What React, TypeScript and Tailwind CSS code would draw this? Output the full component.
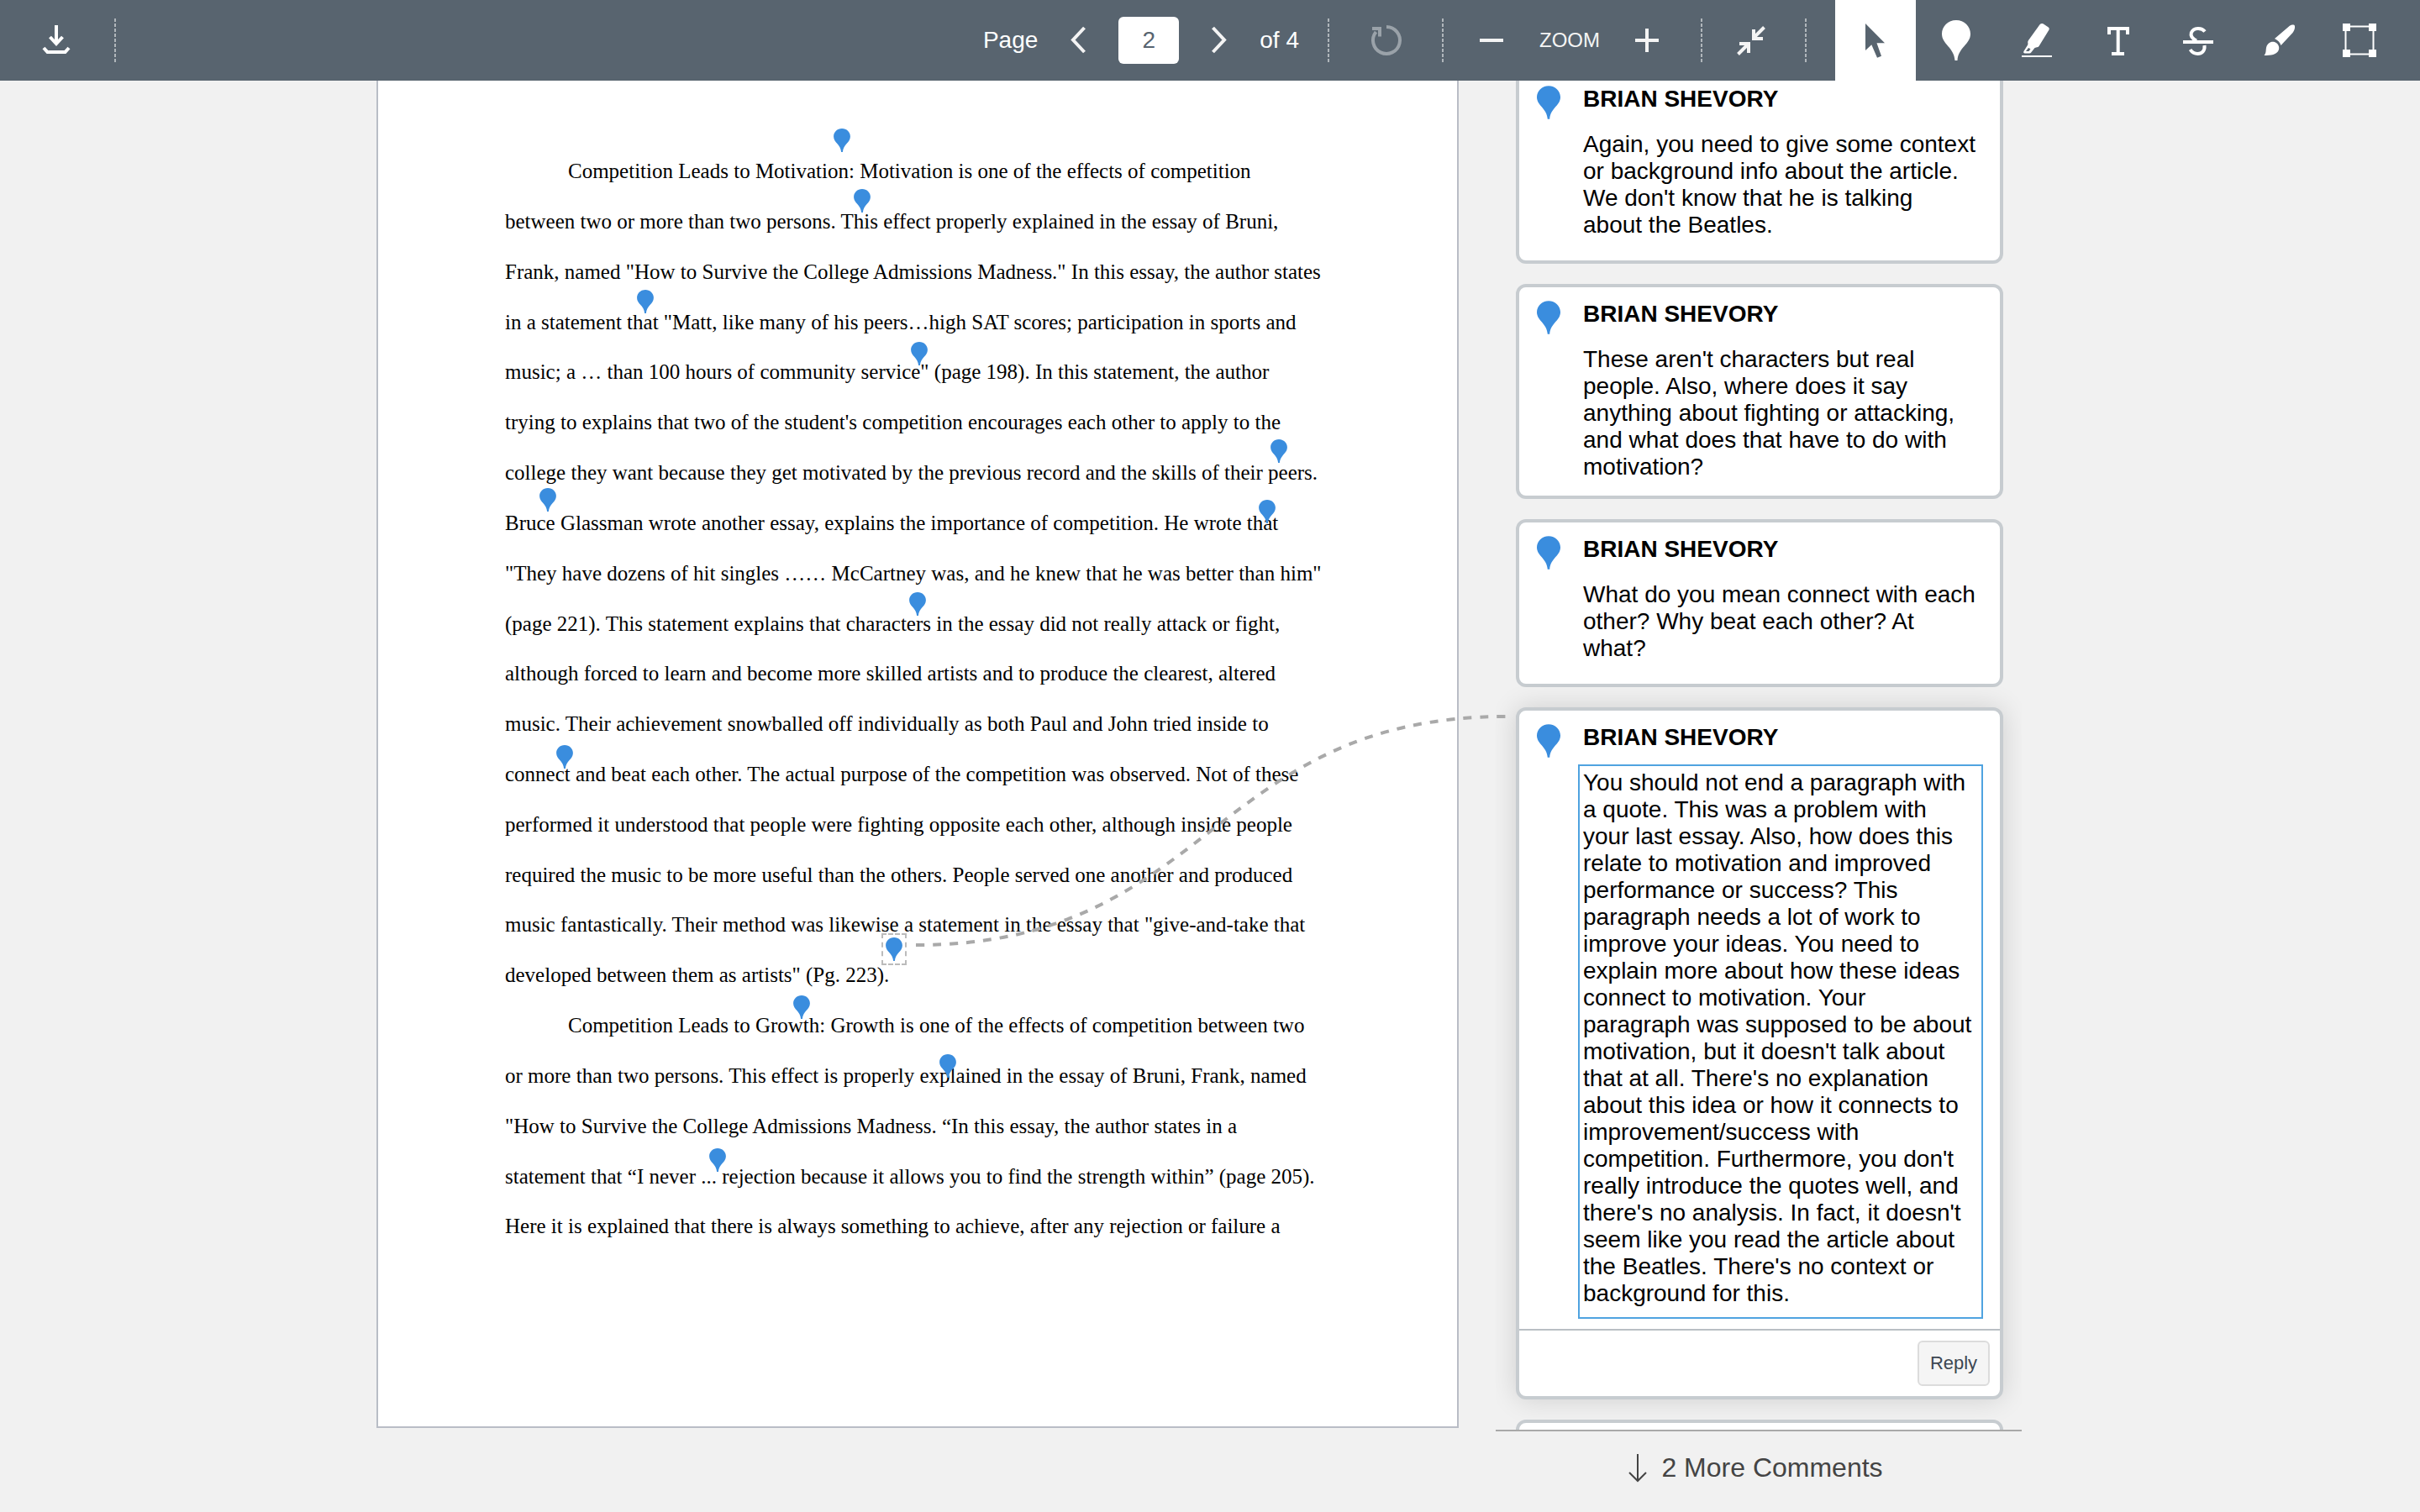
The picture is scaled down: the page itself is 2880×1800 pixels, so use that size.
import { useState } from "react";
import type { ReactNode } from "react";

type Pin = { x: number; y: number };

type Comment = {
  id: number;
  text: string;
  space: string;
};

const REVIEWER = "BRIAN SHEVORY";

const lines = [
  { text: "Competition Leads to Motivation: Motivation is one of the effects of competition", indent: true },
  { text: "between two or more than two persons. This effect properly explained in the essay of Bruni," },
  { text: 'Frank, named "How to Survive the College Admissions Madness." In this essay, the author states' },
  { text: 'in a statement that "Matt, like many of his peers…high SAT scores; participation in sports and' },
  { text: 'music; a … than 100 hours of community service" (page 198). In this statement, the author' },
  { text: "trying to explains that two of the student's competition encourages each other to apply to the" },
  { text: "college they want because they get motivated by the previous record and the skills of their peers." },
  { text: "Bruce Glassman wrote another essay, explains the importance of competition. He wrote that" },
  { text: '"They have dozens of hit singles …… McCartney was, and he knew that he was better than him"' },
  { text: "(page 221). This statement explains that characters in the essay did not really attack or fight," },
  { text: "although forced to learn and become more skilled artists and to produce the clearest, altered" },
  { text: "music. Their achievement snowballed off individually as both Paul and John tried inside to" },
  { text: "connect and beat each other. The actual purpose of the competition was observed. Not of these" },
  { text: "performed it understood that people were fighting opposite each other, although inside people" },
  { text: "required the music to be more useful than the others. People served one another and produced" },
  { text: 'music fantastically. Their method was likewise a statement in the essay that "give-and-take that' },
  { text: 'developed between them as artists" (Pg. 223).' },
  { text: "Competition Leads to Growth: Growth is one of the effects of competition between two", indent: true },
  { text: "or more than two persons. This effect is properly explained in the essay of Bruni, Frank, named" },
  { text: '"How to Survive the College Admissions Madness. “In this essay, the author states in a' },
  { text: "statement that “I never ... rejection because it allows you to find the strength within” (page 205)." },
  { text: "Here it is explained that there is always something to achieve, after any rejection or failure a" },
];

// Pin positions on the page, top centre of each pin
const pins: Pin[] = [
  { x: 552, y: 57 },
  { x: 576, y: 129 },
  { x: 318, y: 249 },
  { x: 644, y: 311 },
  { x: 1072, y: 427 },
  { x: 202, y: 485 },
  { x: 1058, y: 499 },
  { x: 642, y: 609 },
  { x: 222, y: 791 },
  { x: 504, y: 1089 },
  { x: 678, y: 1159 },
  { x: 404, y: 1271 },
];

const selectedPin: Pin = { x: 614, y: 1019 };

const comments: Comment[] = [
  {
    id: 1,
    text: "Again, you need to give some context or background info about the article. We don't know that he is talking about the Beatles.",
    space: "pb-5",
  },
  {
    id: 2,
    text: "These aren't characters but real people. Also, where does it say anything about fighting or attacking, and what does that have to do with motivation?",
    space: "pb-3",
  },
  {
    id: 3,
    text: "What do you mean connect with each other? Why beat each other? At what?",
    space: "pb-5",
  },
];

const selectedText =
  "You should not end a paragraph with a quote. This was a problem with your last essay. Also, how does this relate to motivation and improved performance or success? This paragraph needs a lot of work to improve your ideas. You need to explain more about how these ideas connect to motivation. Your paragraph was supposed to be about motivation, but it doesn't talk about that at all. There's no explanation about this idea or how it connects to improvement/success with competition. Furthermore, you don't really introduce the quotes well, and there's no analysis. In fact, it doesn't seem like you read the article about the Beatles. There's no context or background for this.";

function PinIcon({ className }: { className: string }) {
  return (
    <svg viewBox="0 0 34 48" fill="currentColor" className={className}>
      <path d="M17 0C7.5 0 0 7.3 0 16.2 0 29 14.5 32 15.5 48h3C19.5 32 34 29 34 16.2 34 7.3 26.5 0 17 0Z" />
    </svg>
  );
}

function Icon({ children }: { children: ReactNode }) {
  return (
    <svg
      viewBox="0 0 48 48"
      fill="none"
      stroke="currentColor"
      strokeWidth="4"
      className="h-12 w-12"
    >
      {children}
    </svg>
  );
}

function Divider() {
  return (
    <div className="h-[52px] w-[2px] shrink-0 bg-[repeating-linear-gradient(to_bottom,#b0b6bb_0px,#b0b6bb_4px,transparent_4px,transparent_6px)]" />
  );
}

const tools = [
  {
    name: "Select",
    icon: (
      <Icon>
        <path fill="currentColor" stroke="none" d="M12 4l23 23.3h-9.5L31 42.7l-5 2-6.7-15.4L12 36Z" />
      </Icon>
    ),
  },
  { name: "Point annotation", icon: <PinIcon className="h-12 w-[34px]" /> },
  {
    name: "Highlight",
    icon: (
      <Icon>
        <path
          fill="currentColor"
          stroke="none"
          fillRule="evenodd"
          d="M31.5 4.2l6.3 4.2q1.6 1.2.7 3L26.5 31q-.8 1.2-2.5 1.3l-2.5.7-4.3 5.6q-.7 1-2 1H9.5q-2-.3-1.2-2.3l4.700-7.6q.8-1.5.3-2.700t.7-3L27.5 5.3q1.7-2 4-1.1ZM14 33l-3 4h3.5l2-2.700Z"
        />
        <path strokeWidth="2" d="M6 43h36" />
      </Icon>
    ),
  },
  {
    name: "Text",
    icon: (
      <Icon>
        <path d="M14 17v-7h22v7M24.7 10v30M17 40h15" />
      </Icon>
    ),
  },
  {
    name: "Strikeout",
    icon: (
      <Icon>
        <path d="M6 26h36M32 13.5C28 8.5 18.5 8.5 15.8 15c-1.3 4.5 2.2 7.5 6.2 9.5M31.5 30c.8 7-3.5 10-8 10-4 0-7-2-9-5" />
      </Icon>
    ),
  },
  {
    name: "Draw",
    icon: (
      <Icon>
        <path
          fill="currentColor"
          stroke="none"
          d="M19 22L36 7.5c3-2.5 6.5-2.5 7-.5.5 2.5-1 6-2.5 8L26.5 30C25.5 26.5 22.5 23.5 19 22ZM6.5 42c3-3 1.5-7 3-11 2-5 6.5-6 9.5-5 4 1.5 6 5.5 5 9-2 6.500-10 7-17.500 7Z"
        />
      </Icon>
    ),
  },
  {
    name: "Area",
    icon: (
      <Icon>
        <path strokeWidth="2" d="M7.5 7.5h33v33h-33Z" />
        <path fill="currentColor" stroke="none" d="M4 4h9v9H4ZM35 4h9v9h-9ZM4 35h9v9H4ZM35 35h9v9h-9Z" />
      </Icon>
    ),
  },
];

function Toolbar() {
  const [page, setPage] = useState("2");
  const [active, setActive] = useState("Select");

  return (
    <header className="relative z-20 flex h-24 shrink-0 items-center bg-[#58646f] text-[28px] text-white">
      <button aria-label="Download" className="flex h-24 w-[136px] items-center justify-center">
        <Icon>
          <path d="M23 6v22M15.5 20l7.5 8 7.5-8M8 33l4.5 5h21l4.5-5" />
        </Icon>
      </button>
      <Divider />

      <div className="ml-auto flex items-center">
        <label htmlFor="page">Page</label>
        <button aria-label="Previous page" className="flex h-24 w-24 items-center justify-center text-[#f4f4f4]">
          <Icon>
            <path d="M31.5 9L18 23.5 31.5 38" />
          </Icon>
        </button>
        <input
          id="page"
          className="h-14 w-[72px] rounded-md bg-white text-center text-[#58646f]"
          value={page}
          onChange={(e) => setPage(e.target.value)}
        />
        <button aria-label="Next page" className="flex h-24 w-24 items-center justify-center text-[#f4f4f4]">
          <Icon>
            <path d="M16.5 9L30 23.5 16.5 38" />
          </Icon>
        </button>
        <span className="pr-[34px]">of 4</span>
        <Divider />
        <button aria-label="Rotate" className="flex h-24 w-[134px] items-center justify-center text-[#9aa2a9]">
          <Icon>
            <path d="M25 8a16 16 0 1 1-12.5 6M8 10h9v9.5" />
          </Icon>
        </button>
        <Divider />
        <button aria-label="Zoom out" className="flex h-24 w-[114px] items-center justify-center text-[#f4f4f4]">
          <Icon>
            <path d="M10 24h28" />
          </Icon>
        </button>
        <span className="text-[24px] text-[#f4f4f4]">ZOOM</span>
        <button aria-label="Zoom in" className="mr-2 flex h-24 w-28 items-center justify-center text-[#f4f4f4]">
          <Icon>
            <path d="M10 24h28M24 10v28" />
          </Icon>
        </button>
        <Divider />
        <button aria-label="Fit page" className="mr-2 flex h-24 w-[114px] items-center justify-center text-[#f4f4f4]">
          <Icon>
            <path d="M40.5 8.5L28 21M28 11v11h11M9.5 40.5L22 28M11 28h11v11" />
          </Icon>
        </button>
        <Divider />
      </div>

      <div className="ml-[34px] flex pr-6">
        {tools.map((tool) => (
          <button
            key={tool.name}
            aria-label={tool.name}
            onClick={() => setActive(tool.name)}
            className={`flex h-24 w-24 items-center justify-center ${
              tool.name === active ? "bg-white text-[#58646f]" : "text-white"
            }`}
          >
            {tool.icon}
          </button>
        ))}
      </div>
    </header>
  );
}

function DocumentPage() {
  return (
    <article className="relative z-10 w-[1288px] shrink-0 self-start border-2 border-t-0 border-[#b9bdc6] bg-white pt-[78px] pb-[208px] pl-[151px] font-['Liberation_Serif',serif] text-[25px] text-black">
      <div className="grid h-[1316px] auto-rows-fr">
        {lines.map((line) => (
          <p
            key={line.text}
            className={`flex items-center whitespace-nowrap ${line.indent ? "pl-[75px]" : ""}`}
          >
            {line.text}
          </p>
        ))}
      </div>

      {pins.map((pin) => (
        <button
          key={`${pin.x}-${pin.y}`}
          aria-label="Comment pin"
          className="absolute -translate-x-1/2 text-[#3a8dde]"
          style={{ left: pin.x, top: pin.y }}
        >
          <PinIcon className="h-7 w-5" />
        </button>
      ))}
      <button
        aria-label="Selected comment pin"
        className="absolute flex h-[38px] w-[30px] -translate-x-1/2 -translate-y-1 items-center justify-center border-2 border-dashed border-[#bbbbbb] text-[#3a8dde]"
        style={{ left: selectedPin.x, top: selectedPin.y }}
      >
        <PinIcon className="h-7 w-5 shrink-0" />
      </button>

      {/* connector from the selected pin to its comment */}
      <svg
        className="pointer-events-none absolute top-0 left-0 h-full w-full overflow-visible"
        fill="none"
        stroke="#a9a9a9"
        strokeWidth="4"
        strokeDasharray="10 10"
      >
        <path d="M640 1029C991 1029 991 757 1343 757" />
      </svg>
    </article>
  );
}

function CommentCard({ comment }: { comment: Comment }) {
  return (
    <li className={`flex shrink-0 rounded-xl border-4 border-[#c7ccd0] bg-white pt-4 pr-5 pl-[21px] ${comment.space}`}>
      <PinIcon className="h-10 w-7 shrink-0 text-[#3a8dde]" />
      <div className="ml-[21px] flex-1">
        <h2 className="px-[6px] font-bold">{REVIEWER}</h2>
        <p className="mt-4 border-2 border-transparent p-1">{comment.text}</p>
      </div>
    </li>
  );
}

function SelectedComment() {
  const [text, setText] = useState(selectedText);

  return (
    <li className="shrink-0 rounded-xl border-4 border-[#c7ccd0] bg-white shadow-[0_0_32px_rgba(0,0,0,0.14)]">
      <div className="flex pt-4 pr-5 pb-3 pl-[21px]">
        <PinIcon className="h-10 w-7 shrink-0 text-[#3a8dde]" />
        <div className="ml-[21px] flex-1">
          <label htmlFor="comment" className="block px-[6px] font-bold">
            {REVIEWER}
          </label>
          <textarea
            id="comment"
            rows={20}
            value={text}
            onChange={(e) => setText(e.target.value)}
            className="mt-4 block w-full resize-none overflow-hidden border-2 border-[#4fa3e0] p-1 pb-3 outline-none"
          />
        </div>
      </div>
      <div className="flex justify-end border-t-2 border-[#b9bfc4] p-3">
        <button className="h-[54px] w-[86px] rounded-md border-2 border-[#dcdcdc] bg-[#f5f5f5] text-[22px] text-[#3d4752]">
          Reply
        </button>
      </div>
    </li>
  );
}

export default function App() {
  return (
    <div className="flex h-screen flex-col overflow-hidden bg-[#f1f1f1] font-['Liberation_Sans',Arial,sans-serif]">
      <Toolbar />
      <main className="flex min-h-0 flex-1 justify-center gap-11 pr-[26px]">
        <DocumentPage />
        <aside className="flex w-[626px] shrink-0 flex-col">
          <ul className="-mt-[14px] flex min-h-0 flex-1 flex-col gap-6 overflow-hidden pr-[22px] pl-6 text-[28px] leading-8 text-black">
            {comments.map((comment) => (
              <CommentCard key={comment.id} comment={comment} />
            ))}
            <SelectedComment />
            <li className="h-[200px] shrink-0 rounded-xl border-4 border-[#c7ccd0] bg-white" />
          </ul>
          <button className="flex h-[98px] shrink-0 items-center justify-center gap-4 border-t-2 border-[#a9a9a9] pr-2 pb-[10px] text-[32px] text-[#444444]">
            <svg viewBox="0 0 24 36" fill="none" stroke="currentColor" strokeWidth="2" className="h-9 w-6">
              <path d="M12 2v32M2 24l10 10 10-10" />
            </svg>
            2 More Comments
          </button>
        </aside>
      </main>
    </div>
  );
}
